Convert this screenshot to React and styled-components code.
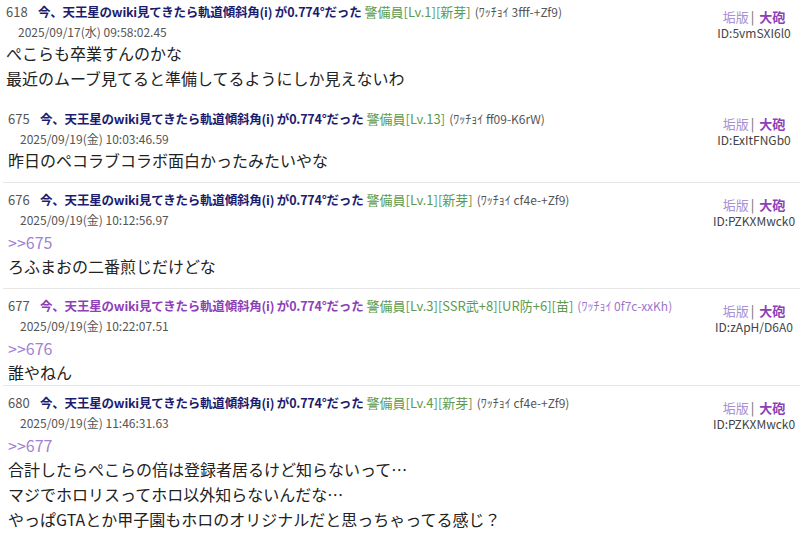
import React from 'react';
import styled, { createGlobalStyle } from 'styled-components';

const GlobalStyle = createGlobalStyle`
  body {
    margin: 0;
    background: #fff;
    font-family: "Noto Sans CJK JP", "Noto Sans", sans-serif;
    color: #222;
  }
`;

const posts = [
  {
    no: 618,
    tags: '[Lv.1][新芽]',
    watch: '3fff-+Zf9',
    date: '2025/09/17(水) 09:58:02.45',
    id: '5vmSXI6l0',
    lines: ['ぺこらも卒業すんのかな', '最近のムーブ見てると準備してるようにしか見えないわ'],
    first: true,
  },
  {
    no: 675,
    tags: '[Lv.13]',
    watch: 'ff09-K6rW',
    date: '2025/09/19(金) 10:03:46.59',
    id: 'ExItFNGb0',
    lines: ['昨日のペコラブコラボ面白かったみたいやな'],
  },
  {
    no: 676,
    tags: '[Lv.1][新芽]',
    watch: 'cf4e-+Zf9',
    date: '2025/09/19(金) 10:12:56.97',
    id: 'PZKXMwck0',
    anchor: 675,
    lines: ['ろふまおの二番煎じだけどな'],
  },
  {
    no: 677,
    tags: '[Lv.3][SSR武+8][UR防+6][苗]',
    watch: '0f7c-xxKh',
    date: '2025/09/19(金) 10:22:07.51',
    id: 'zApH/D6A0',
    anchor: 676,
    lines: ['誰やねん'],
    mine: true,
    tail: 0,
  },
  {
    no: 680,
    tags: '[Lv.4][新芽]',
    watch: 'cf4e-+Zf9',
    date: '2025/09/19(金) 11:46:31.63',
    id: 'PZKXMwck0',
    anchor: 677,
    lines: [
      '合計したらぺこらの倍は登録者居るけど知らないって…',
      'マジでホロリスってホロ以外知らないんだな…',
      'やっぱGTAとか甲子園もホロのオリジナルだと思っちゃってる感じ？',
    ],
  },
];

const Thread = styled.div`
  padding: 0 6px 0 3px;
`;

const Post = styled.article`
  padding: ${p => (p.$first ? '2px 0 0 3px' : '7px 0 0 5px')};
  padding-bottom: ${p => (p.$tail ?? 9)}px;
  border-bottom: 1px solid #e6e6e6;
  &:first-child { border-bottom: none; padding-bottom: 11px; }
  &:last-child { border-bottom: none; }
`;

const Top = styled.div`
  display: flex;
  justify-content: space-between;
  align-items: flex-start;
`;

const Meta = styled.div`
  display: flex;
  flex-direction: column;
`;

const Header = styled.div`
  display: flex;
  align-items: baseline;
  white-space: nowrap;
  height: 20px;
  line-height: 20px;
`;

const Num = styled.span`
  font-size: 13px;
  color: #555;
  width: 32px;
`;

const Title = styled.span`
  font-size: 12.5px;
  letter-spacing: -0.2px;
  font-weight: bold;
  color: ${p => (p.$mine ? '#8e3fb8' : '#1c1c6e')};
  margin-right: 3px;
`;

const Name = styled.span`
  font-size: 13px;
  color: #5d9a4c;
  margin-right: 4px;
`;

const Watch = styled.span`
  font-size: 12px;
  color: ${p => (p.$mine ? '#9d76c9' : '#555')};
`;

const Date = styled.div`
  font-size: 12px;
  color: #555;
  padding-left: 12px;
  line-height: 19px;
`;

const Side = styled.div`
  width: 92px;
  text-align: center;
  padding-top: 6px;
`;

const Mark = styled.div`
  font-size: 13px;
  line-height: 17px;
`;

const Ban = styled.span`
  color: #ab8fd2;
`;

const Sep = styled.span`
  color: #666;
  margin: 0 5px 0 2px;
`;

const Cannon = styled.span`
  color: #8e3fb8;
  font-weight: bold;
`;

const Id = styled.div`
  font-size: 12px;
  line-height: 15px;
  color: #444;
`;

const Body = styled.div`
  font-size: 16px;
  line-height: 25px;
`;

const Anchor = styled.div`
  font-size: 16px;
  line-height: 24px;
  margin-top: 1px;
  color: #9f82d2;
`;

export default function App() {
  return (
    <>
      <GlobalStyle />
      <Thread>
        {posts.map(p => (
          <Post key={p.no} $first={p.first} $tail={p.tail}>
            <Top>
              <Meta>
                <Header>
                  <Num>{p.no}</Num>
                  <Title $mine={p.mine}>今、天王星のwiki見てきたら軌道傾斜角(i) が0.774°だった</Title>
                  <Name>警備員{p.tags}</Name>
                  <Watch $mine={p.mine}>(ﾜｯﾁｮｲ {p.watch})</Watch>
                </Header>
                <Date>{p.date}</Date>
              </Meta>
              <Side>
                <Mark>
                  <Ban>垢版</Ban>
                  <Sep>|</Sep>
                  <Cannon>大砲</Cannon>
                </Mark>
                <Id>ID:{p.id}</Id>
              </Side>
            </Top>
            <Body>
              {p.anchor && <Anchor>&gt;&gt;{p.anchor}</Anchor>}
              {p.lines.map((l, i) => (
                <div key={i}>{l}</div>
              ))}
            </Body>
          </Post>
        ))}
      </Thread>
    </>
  );
}
